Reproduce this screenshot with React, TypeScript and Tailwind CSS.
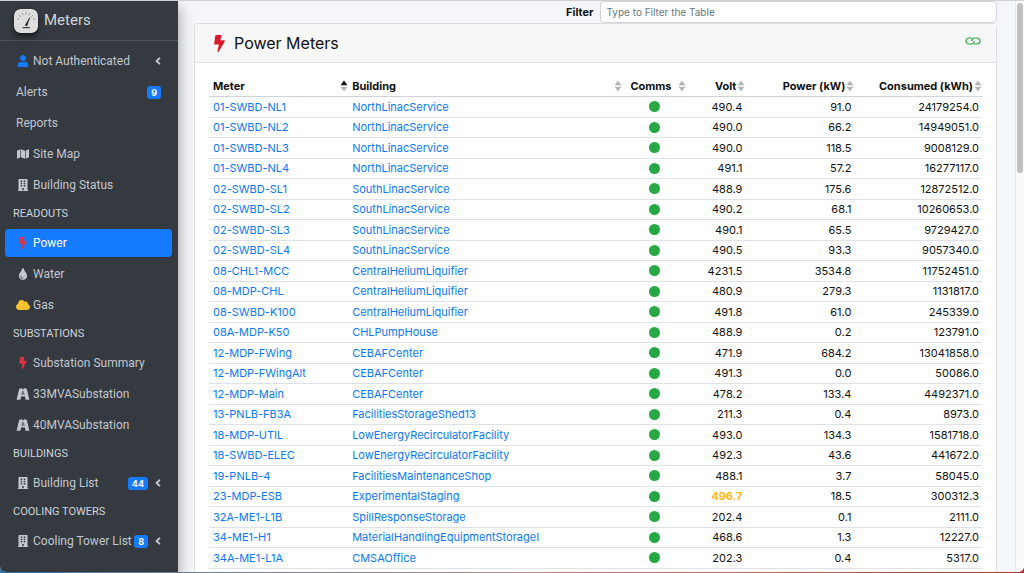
import React from 'react';
import {
  FaUser, FaMap, FaBuilding, FaBolt, FaTint, FaCloud, FaAngleLeft,
} from 'react-icons/fa';

type Row = [string, string, string, string, string];

const rows: Row[] = [
  ['01-SWBD-NL1', 'NorthLinacService', '490.4', '91.0', '24179254.0'],
  ['01-SWBD-NL2', 'NorthLinacService', '490.0', '66.2', '14949051.0'],
  ['01-SWBD-NL3', 'NorthLinacService', '490.0', '118.5', '9008129.0'],
  ['01-SWBD-NL4', 'NorthLinacService', '491.1', '57.2', '16277117.0'],
  ['02-SWBD-SL1', 'SouthLinacService', '488.9', '175.6', '12872512.0'],
  ['02-SWBD-SL2', 'SouthLinacService', '490.2', '68.1', '10260653.0'],
  ['02-SWBD-SL3', 'SouthLinacService', '490.1', '65.5', '9729427.0'],
  ['02-SWBD-SL4', 'SouthLinacService', '490.5', '93.3', '9057340.0'],
  ['08-CHL1-MCC', 'CentralHeliumLiquifier', '4231.5', '3534.8', '11752451.0'],
  ['08-MDP-CHL', 'CentralHeliumLiquifier', '480.9', '279.3', '1131817.0'],
  ['08-SWBD-K100', 'CentralHeliumLiquifier', '491.8', '61.0', '245339.0'],
  ['08A-MDP-K50', 'CHLPumpHouse', '488.9', '0.2', '123791.0'],
  ['12-MDP-FWing', 'CEBAFCenter', '471.9', '684.2', '13041858.0'],
  ['12-MDP-FWingAlt', 'CEBAFCenter', '491.3', '0.0', '50086.0'],
  ['12-MDP-Main', 'CEBAFCenter', '478.2', '133.4', '4492371.0'],
  ['13-PNLB-FB3A', 'FacilitiesStorageShed13', '211.3', '0.4', '8973.0'],
  ['18-MDP-UTIL', 'LowEnergyRecirculatorFacility', '493.0', '134.3', '1581718.0'],
  ['18-SWBD-ELEC', 'LowEnergyRecirculatorFacility', '492.3', '43.6', '441672.0'],
  ['19-PNLB-4', 'FacilitiesMaintenanceShop', '488.1', '3.7', '58045.0'],
  ['23-MDP-ESB', 'ExperimentalStaging', '496.7', '18.5', '300312.3'],
  ['32A-ME1-L1B', 'SpillResponseStorage', '202.4', '0.1', '2111.0'],
  ['34-ME1-H1', 'MaterialHandlingEquipmentStorageI', '468.6', '1.3', '12227.0'],
  ['34A-ME1-L1A', 'CMSAOffice', '202.3', '0.4', '5317.0'],
  ['', '', '', '', ''],
];

function SortMark({ asc = false }: { asc?: boolean }) {
  return (
    <svg viewBox="0 0 8 12" className="h-3 w-2 shrink-0" aria-hidden="true">
      <path d="M4 0.5 7.5 5.3H0.5Z" fill={asc ? '#111' : '#b5b5b5'} />
      <path d="M4 11.5 7.5 6.7H0.5Z" fill="#b5b5b5" />
    </svg>
  );
}

function SubstationIcon() {
  return (
    <svg viewBox="0 0 14 12" className="h-3 w-[14px]" fill="currentColor" aria-hidden="true">
      <path
        fillRule="evenodd"
        d="M3.200 0.800H4.500V0.200H6.200V1.200H7.800V0.200H9.500V0.800H10.800L13.400 11.700H9.500L9 8.600H5L4.500 11.700H0.600ZM6.300 3 5.500 6.800H8.500L7.700 3Z"
      />
      <path d="M6.600 2.500h.8v5h-.8z" />
    </svg>
  );
}

function NavItem({
  icon, label, badge, arrow, active,
}: { icon?: React.ReactNode; label: string; badge?: string; arrow?: boolean; active?: boolean }) {
  return (
    <li>
      <a
        href="#"
        className={`flex h-7 items-center rounded pr-2 pl-[11px] text-xs ${active ? 'bg-[#147bff] text-white' : 'text-[#c2c7d0]'}`}
      >
        {icon && <span className="mr-[2px] -ml-px flex w-4 shrink-0 justify-center text-xs">{icon}</span>}
        <span className="whitespace-nowrap">{label}</span>
        <span className="ml-auto flex items-center">
          {badge && (
            <span className={`rounded-[3px] bg-[#147bff] px-1 font-['Inter','Liberation_Sans',sans-serif] text-[9px] leading-[13px] font-bold text-white ${arrow ? '' : 'mr-[3px]'}`}>
              {badge}
            </span>
          )}
          {arrow && <FaAngleLeft className="ml-1 size-3" />}
        </span>
      </a>
    </li>
  );
}

function Group({ title, children }: { title?: string; children: React.ReactNode }) {
  return (
    <section>
      {title && <h2 className="flex h-[30px] items-center pl-2 text-[11px] text-[#d0d4db]">{title}</h2>}
      <ul className="flex flex-col gap-[3px]">{children}</ul>
    </section>
  );
}

function Logo() {
  return (
    <svg viewBox="0 0 24 24" className="size-6 rounded-md shadow-md shadow-black/50" aria-hidden="true">
      <rect width="24" height="24" rx="6.5" fill="#dededd" />
      <path d="M3 9.5 5 10.5M5 6l1.600 2M8.300 4l.8 2.200M12 2.800V5.400M15.700 4l-.8 2.200M19 6l-1.600 2M21 9.500l-2 1" stroke="#858585" strokeWidth="0.8" fill="none" />
      <path d="M15.800 8.400 11.200 16.200l1.700.8Z" fill="#222" stroke="#222" strokeWidth="0.5" />
      <path d="M8.500 18.700h7.500" stroke="#444" strokeWidth="1.2" />
    </svg>
  );
}

export default function App() {
  return (
    <div className="h-screen bg-linear-to-r from-[#2f6f9f] via-[#b98f85] to-[#b5372f] pb-px">
      <div className="flex h-full overflow-hidden rounded-b-md border-t border-[#cfd1d3] bg-[#f4f6f9] font-['Inter','Liberation_Sans',sans-serif] text-[11px] text-[#111]">
        <aside className="z-10 w-[178px] shrink-0 bg-[#343a40] font-['Roboto','Liberation_Sans',sans-serif] shadow-[0_6px_14px_rgba(0,0,0,0.4)]">
          <a href="#" className="flex h-10 items-center gap-[6px] border-b border-[#4b545c] pl-[14px] text-[15px] text-[#d3d6da]">
            <Logo />
            <span>Meters</span>
          </a>
          <nav className="pt-[6px] pr-[6px] pl-[5px]">
            <Group>
              <NavItem icon={<FaUser className="text-[#147bff]" />} label="Not Authenticated" arrow />
              <NavItem label="Alerts" badge="9" />
              <NavItem label="Reports" />
              <NavItem icon={<FaMap />} label="Site Map" />
              <NavItem icon={<FaBuilding />} label="Building Status" />
            </Group>
            <Group title="READOUTS">
              <NavItem icon={<FaBolt className="text-[#dc3545]" />} label="Power" active />
              <NavItem icon={<FaTint />} label="Water" />
              <NavItem icon={<FaCloud className="size-[14px] text-[#ffc02e]" />} label="Gas" />
            </Group>
            <Group title="SUBSTATIONS">
              <NavItem icon={<FaBolt className="text-[#dc3545]" />} label="Substation Summary" />
              <NavItem icon={<SubstationIcon />} label="33MVASubstation" />
              <NavItem icon={<SubstationIcon />} label="40MVASubstation" />
            </Group>
            <Group title="BUILDINGS">
              <NavItem icon={<FaBuilding />} label="Building List" badge="44" arrow />
            </Group>
            <Group title="COOLING TOWERS">
              <NavItem icon={<FaBuilding />} label="Cooling Tower List" badge="8" arrow />
            </Group>
          </nav>
        </aside>

        <main className="min-w-0 flex-1 pr-[18px] pl-4">
          <div className="flex h-[22px] items-center justify-end gap-[6px]">
            <label htmlFor="filter" className="text-[11px] font-bold">Filter</label>
            <input
              id="filter"
              type="text"
              placeholder="Type to Filter the Table"
              className="h-[22px] w-[49.5%] rounded-sm border border-[#ced4da] bg-white px-[6px] text-[10px] placeholder:text-[#6c757d]"
            />
          </div>
          <section className="rounded-t-sm border border-[#dfdfdf] bg-white">
            <header className="flex h-[39px] items-center border-b border-[#dfdfdf] bg-[#f7f7f7] px-[15px]">
              <FaBolt className="mr-[6px] ml-px size-[17px] text-[#dc1a2b]" />
              <h1 className="text-base">Power Meters</h1>
              <a href="#" aria-label="Link" className="mb-1 ml-auto text-[#28a745]">
                <svg viewBox="0 0 16 8" className="h-2 w-4" fill="none" stroke="currentColor" strokeWidth="1.2">
                  <path d="M7 1H4a3 3 0 0 0 0 6h2.200a3 3 0 0 0 3-3M9 7h3a3 3 0 0 0 0-6H9.800a3 3 0 0 0-3 3" />
                </svg>
              </a>
            </header>
            <div className="px-[14px] pt-[13px]">
              <table className="w-full table-fixed border-collapse">
                <colgroup>
                  <col className="w-[18%]" />
                  <col className="w-[36%]" />
                  <col className="w-[60px]" />
                  <col className="w-[59px]" />
                  <col className="w-[109px]" />
                  <col />
                </colgroup>
                <thead>
                  <tr className="h-5 border-b border-[#ced4da] font-bold">
                    <th className="pl-1"><div className="flex items-center justify-between">Meter<SortMark asc /></div></th>
                    <th className="px-1"><div className="flex items-center justify-between">Building<SortMark /></div></th>
                    <th className="pl-1"><div className="flex items-center justify-between">Comms<SortMark /></div></th>
                    <th><div className="flex items-center justify-end gap-px">Volt<SortMark /></div></th>
                    <th><div className="flex items-center justify-end gap-px">Power (kW)<SortMark /></div></th>
                    <th><div className="flex items-center justify-end gap-px">Consumed (kWh)<SortMark /></div></th>
                  </tr>
                </thead>
                <tbody>
                  {rows.map(([meter, building, volt, power, used], i) => (
                    <tr key={i} className="border-b border-[#dee2e6] leading-4 odd:h-[21px] even:h-5">
                      <td className="px-1 text-[#0a78f5]">{meter && <a href="#">{meter}</a>}</td>
                      <td className="px-1 text-[#0a78f5]">{building && <a href="#">{building}</a>}</td>
                      <td className="pr-1"><span className="mx-auto block size-[11px] rounded-full bg-[#28a745]" /></td>
                      <td className={`pr-[3px] text-right ${volt === '496.7' ? 'font-bold text-[#ffb81c]' : ''}`}>{volt}</td>
                      <td className="pr-[3px] text-right">{power}</td>
                      <td className="pr-[3px] text-right">{used}</td>
                    </tr>
                  ))}
                </tbody>
              </table>
            </div>
          </section>
        </main>
        <div className="w-[9px] shrink-0 border-l border-[#e8e8e8] bg-[#fafafa] pt-[2px]">
          <div className="mx-auto h-[170px] w-[6px] rounded-full bg-[#c1c1c1]" />
        </div>
      </div>
    </div>
  );
}
